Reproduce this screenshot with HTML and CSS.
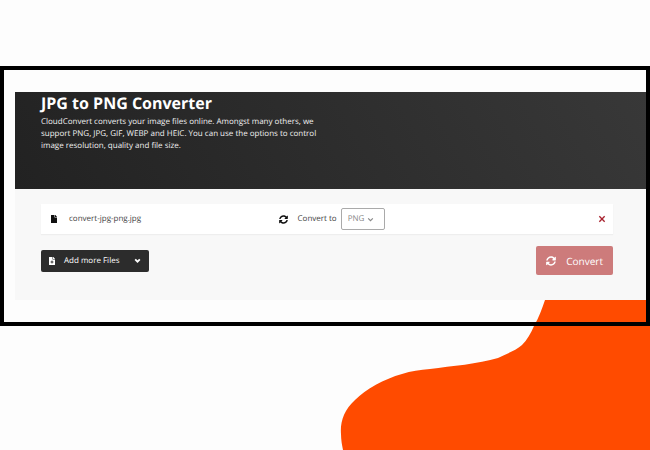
FILE: index.html
```html
<!DOCTYPE html>
<html lang="en">
<head>
    <meta charset="UTF-8">
    <meta name="viewport" content="width=device-width, initial-scale=1.0">
    <title>JPG to PNG Converter</title>
    <link rel="stylesheet" href="styles.css">
</head>
<body>

    <svg class="blob" viewBox="0 0 310 150" aria-hidden="true">
        <path d="M205 0C202 9 199 17 194 26C191 33 187 40 182 45C175 51 166 54 158 58C138 64 112 66 90 69C80 70 71 71 62 74C44 79 26 89 15 100C4 110 0 122 1 134C1 140 2 145 3 150H310V0Z"/>
    </svg>

    <main class="frame">
        <header class="banner">
            <h1>JPG to PNG Converter</h1>
            <p>CloudConvert converts your image files online. Amongst many others, we support PNG, JPG, GIF, WEBP and HEIC. You can use the options to control image resolution, quality and file size.</p>
        </header>

        <form class="workspace">
            <div class="file-row">
                <div class="file">
                    <svg class="icon-file" viewBox="0 0 384 512" aria-hidden="true">
                        <path d="M224 136V0H24C11 0 0 11 0 24v464c0 13 11 24 24 24h336c13 0 24-11 24-24V160H248c-13 0-24-11-24-24zm160-14v6H256V0h6c6 0 12 3 17 7l98 98c4 4 7 11 7 17z"/>
                    </svg>
                    <span>convert-jpg-png.jpg</span>
                </div>
                <div class="target">
                    <svg class="icon-sync" viewBox="0 0 512 512" aria-hidden="true">
                        <path d="M371 141c-32-30-72-46-115-46-78 0-145 53-163 127-1 5-6 9-12 9H24c-8 0-13-7-12-14C33 104 135 16 256 16c66 0 127 26 171 69l36-36c15-15 41-4 41 17v134c0 13-11 24-24 24H346c-21 0-32-26-17-41zM32 288h134c21 0 32 26 17 41l-42 42c32 30 72 46 115 46 78 0 145-53 163-127 1-5 6-9 12-9h57c8 0 13 7 12 14-21 113-123 201-244 201-66 0-127-26-171-69l-36 36c-15 15-41 4-41-17V312c0-13 11-24 24-24z"/>
                    </svg>
                    <label for="format">Convert to</label>
                    <span class="format">
                        <select id="format">
                            <option>PNG</option>
                        </select>
                        <svg class="icon-chevron" viewBox="0 0 12 8" aria-hidden="true">
                            <path d="M2 2l4 4 4-4"/>
                        </svg>
                    </span>
                </div>
                <button type="button" class="remove" aria-label="Remove file">
                    <svg viewBox="0 0 12 12" aria-hidden="true">
                        <path d="M2 2l8 8M10 2l-8 8"/>
                    </svg>
                </button>
            </div>

            <div class="actions">
                <button type="button" class="add">
                    <svg class="icon-file" viewBox="0 0 384 512" aria-hidden="true">
                        <path fill-rule="evenodd" d="M224 136V0H24C11 0 0 11 0 24v464c0 13 11 24 24 24h336c13 0 24-11 24-24V160H248c-13 0-24-11-24-24zM165 230h54v63h63v54h-63v63h-54v-63h-63v-54h63zM384 122v6H256V0h6c6 0 12 3 17 7l98 98c4 4 7 11 7 17z"/>
                    </svg>
                    <span>Add more Files</span>
                    <svg class="icon-chevron" viewBox="0 0 12 8" aria-hidden="true">
                        <path d="M2 2l4 4 4-4"/>
                    </svg>
                </button>
                <button type="submit" class="convert">
                    <svg class="icon-sync" viewBox="0 0 512 512" aria-hidden="true">
                        <path d="M371 141c-32-30-72-46-115-46-78 0-145 53-163 127-1 5-6 9-12 9H24c-8 0-13-7-12-14C33 104 135 16 256 16c66 0 127 26 171 69l36-36c15-15 41-4 41 17v134c0 13-11 24-24 24H346c-21 0-32-26-17-41zM32 288h134c21 0 32 26 17 41l-42 42c32 30 72 46 115 46 78 0 145-53 163-127 1-5 6-9 12-9h57c8 0 13 7 12 14-21 113-123 201-244 201-66 0-127-26-171-69l-36 36c-15 15-41 4-41-17V312c0-13 11-24 24-24z"/>
                    </svg>
                    <span>Convert</span>
                </button>
            </div>
        </form>
    </main>

</body>
</html>
```
FILE: styles.css
```css
* {
    box-sizing: border-box;
}
body {
    position: relative;
    min-height: 100vh;
    margin: 0;
    padding-top: 66px;
    background: #fdfdfd;
    color: #444;
    font-family: "Open Sans", "Noto Sans", sans-serif;
    font-size: 8px;
    line-height: 12px;
    text-rendering: geometricPrecision;
    overflow: hidden;
}
svg {
    display: block;
    fill: currentColor;
}
button, select {
    font: inherit;
    text-rendering: inherit;
    cursor: pointer;
}
/* orange shape in the page corner */
.blob {
    position: absolute;
    right: 0;
    bottom: 0;
    width: 310px;
    height: 150px;
    fill: #ff4b00;
}
.frame {
    position: relative;
    padding: 22px 0 22px 11px;
    border: 4px solid #000;
}
.banner {
    min-height: 97px;
    padding: 0 26px;
    background: linear-gradient(60deg, #222, #383838);
    color: #fff;
}
h1 {
    margin: 0 0 2px;
    font-size: 16px;
    line-height: 22px;
}
.banner p {
    max-width: 280px;
    margin: 0;
    color: #f0f0f0;
}
.workspace {
    padding: 15px 33px 25px 26px;
    background: #f8f8f8;
}
.file-row {
    display: grid;
    grid-template-columns: 41% 1fr auto;
    align-items: center;
    min-height: 30px;
    padding: 0 7px 0 10px;
    background: #fff;
    box-shadow: 0 1px 1px #eee;
}
.file, .target, .actions, .add, .convert {
    display: flex;
    align-items: center;
}
.file {
    gap: 12px;
}
.icon-file {
    width: 6px;
    height: 8px;
}
.file .icon-file, .target .icon-sync {
    color: #111;
}
.icon-sync {
    width: 9px;
    height: 9px;
}
.icon-chevron {
    width: 7px;
    height: 5px;
    fill: none;
    stroke: currentColor;
    stroke-width: 2;
}
.target label {
    margin: 0 4px 0 10px;
}
.format {
    position: relative;
    color: #888;
}
.format select {
    width: 44px;
    height: 22px;
    padding: 0 6px;
    border: 1px solid #aaa;
    border-radius: 2px;
    background: #fff;
    color: inherit;
    appearance: none;
}
.format .icon-chevron {
    position: absolute;
    top: 9px;
    right: 11px;
    pointer-events: none;
}
.remove {
    padding: 0;
    border: 0;
    background: none;
    color: #a8232f;
}
.remove svg {
    width: 8px;
    height: 8px;
    stroke: currentColor;
    stroke-width: 2;
}
.actions {
    justify-content: space-between;
    margin-top: 12px;
}
.add {
    gap: 9px;
    height: 22px;
    padding: 0 8px;
    border: 0;
    border-radius: 2px;
    background: #2c2c2c;
    color: #fff;
}
.add .icon-chevron {
    margin-left: 6px;
    stroke-width: 3;
}
.convert {
    gap: 10px;
    height: 29px;
    padding: 0 10px;
    border: 0;
    border-radius: 2px;
    background: #cd7b7b;
    color: #fff;
    font-size: 10px;
}
.convert .icon-sync {
    width: 10px;
    height: 10px;
}
```
